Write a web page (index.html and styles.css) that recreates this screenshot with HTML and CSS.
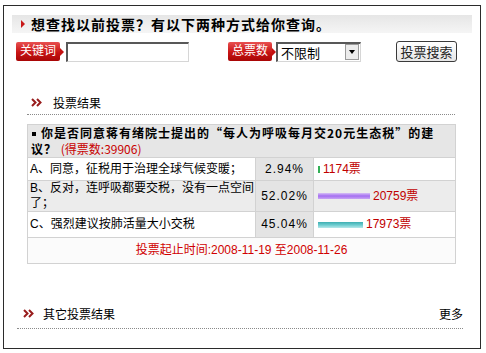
FILE: index.html
```html
<!DOCTYPE html>
<html lang="zh-CN">
<head>
    <meta charset="UTF-8">
    <title>投票查询</title>
    <link rel="stylesheet" href="styles.css">
</head>
<body>
    <div class="panel">
        <div class="search-title"><span class="title-mark"></span>想查找以前投票？有以下两种方式给你查询。</div>

        <div class="search-row">
            <span class="tag"><span class="tag-text">关键词</span></span>
            <input class="keyword" type="text">
            <span class="tag tag-count"><span class="tag-text">总票数</span></span>
            <div class="range-select">
                <span class="range-value">不限制</span>
                <span class="range-btn"></span>
            </div>
            <button class="search-btn">投票搜索</button>
        </div>

        <!-- 投票结果 -->
        <div class="section-head result-head">
            <svg class="head-mark" width="11" height="9" viewBox="0 0 11 9"><path d="M1 1l3.5 3.5L1 8M6 1l3.5 3.5L6 8" fill="none" stroke="#981c1c" stroke-width="2"/></svg>
            <span>投票结果</span>
        </div>

        <table class="poll">
            <colgroup>
                <col class="col-item">
                <col class="col-pct">
                <col class="col-vote">
            </colgroup>
            <tr class="row-question">
                <td colspan="3" class="question"><span class="dot"></span>你是否同意蒋有绪院士提出的“每人为呼吸每月交20元生态税”的建议？ <span class="total">(得票数:39906)</span></td>
            </tr>
            <tr class="row-a">
                <td class="item">A、同意，征税用于治理全球气候变暖；</td>
                <td class="pct">2.94%</td>
                <td class="vote"><span class="bar bar-green" style="width:2px"></span>1174票</td>
            </tr>
            <tr class="row-b alt">
                <td class="item">B、反对，连呼吸都要交税，没有一点空间了；</td>
                <td class="pct">52.02%</td>
                <td class="vote"><span class="bar bar-purple" style="width:52px"></span>20759票</td>
            </tr>
            <tr class="row-c">
                <td class="item">C、强烈建议按肺活量大小交税</td>
                <td class="pct">45.04%</td>
                <td class="vote"><span class="bar bar-teal" style="width:45px"></span>17973票</td>
            </tr>
            <tr class="row-foot">
                <td colspan="3" class="period">投票起止时间:2008-11-19 至2008-11-26</td>
            </tr>
        </table>

        <!-- 其它投票结果 -->
        <div class="section-head other-head">
            <svg class="head-mark" width="11" height="9" viewBox="0 0 11 9"><path d="M1 1l3.5 3.5L1 8M6 1l3.5 3.5L6 8" fill="none" stroke="#981c1c" stroke-width="2"/></svg>
            <span>其它投票结果</span>
            <a class="more" href="#">更多</a>
        </div>
    </div>
</body>
</html>
```

FILE: styles.css
```css
body {
    margin: 0;
    background: #fff;
    color: #000;
    font-family: "Liberation Sans", "Noto Sans CJK SC", sans-serif;
    font-size: 12px;
}

.panel {
    box-sizing: border-box;
    width: 478px;
    height: 344px;
    margin: 5px 0 0 3px;
    padding: 9px 8px 0;
    border: 1px solid #2b2b2b;
}

/* search box */
.search-title {
    display: flex;
    align-items: center;
    height: 18px;
    padding-left: 9px;
    background: linear-gradient(to bottom, #e6e6e6, #f5f5f5);
    font-family: "Noto Sans CJK SC", sans-serif;
    font-size: 14px;
    font-weight: bold;
    letter-spacing: 1px;
}

.title-mark {
    width: 0;
    height: 0;
    margin-right: 6px;
    border-left: 4px solid #c81818;
    border-top: 4px solid transparent;
    border-bottom: 4px solid transparent;
}

.search-row {
    display: flex;
    align-items: center;
    height: 21px;
    margin-top: 8px;
    padding-left: 4px;
}

.tag {
    display: flex;
    align-items: center;
}

.tag-text {
    height: 19px;
    line-height: 19px;
    padding: 0 4px;
    border-radius: 2px;
    color: #fff;
    font-size: 12px;
    background: linear-gradient(to bottom, #e85050, #c81414 55%, #a80606);
}

.tag::after {
    content: "";
    border-left: 4px solid #c41010;
    border-top: 4px solid transparent;
    border-bottom: 4px solid transparent;
}

.keyword {
    box-sizing: border-box;
    width: 123px;
    height: 20px;
    margin: 0 0 0 2px;
    padding: 0 2px;
    border-top: 2px solid #585858;
    border-left: 2px solid #585858;
    border-right: 1px solid #d6d6d6;
    border-bottom: 1px solid #d6d6d6;
    background: #fff;
}

.tag-count {
    margin-left: 39px;
}

.range-select {
    box-sizing: border-box;
    display: flex;
    align-items: center;
    width: 85px;
    height: 20px;
    border-top: 2px solid #585858;
    border-left: 2px solid #585858;
    border-right: 1px solid #d6d6d6;
    border-bottom: 1px solid #d6d6d6;
    background: #fff;
}

.range-value {
    flex: 1;
    padding-left: 3px;
    font-size: 13px;
    font-family: "Noto Sans CJK SC", sans-serif;
}

.range-btn {
    box-sizing: border-box;
    display: flex;
    align-items: center;
    justify-content: center;
    width: 14px;
    height: 16px;
    margin-right: 1px;
    border: 1px solid #9a9a9a;
    background: #ececec;
}

.range-btn::after {
    content: "";
    border-top: 4px solid #000;
    border-left: 3px solid transparent;
    border-right: 3px solid transparent;
}

.search-btn {
    box-sizing: border-box;
    width: 61px;
    height: 21px;
    margin-left: 35px;
    padding: 0;
    border: 1px solid #3a3a3a;
    border-radius: 3px;
    background: linear-gradient(to bottom, #ffffff, #e6e6e6);
    color: #222;
    font-family: "Noto Sans CJK SC", sans-serif;
    font-size: 13px;
}

/* section heads */
.section-head {
    display: flex;
    align-items: center;
    height: 24px;
    border-bottom: 1px dotted #8a8a8a;
}

.result-head {
    margin: 28px 17px 0 15px;
    padding-left: 4px;
    gap: 11px;
}

.other-head {
    height: 22px;
    margin: 38px 9px 0 5px;
    padding: 0 0 4px 6px;
    gap: 9px;
}

.more {
    margin-left: auto;
    color: #000;
    text-decoration: none;
}

/* poll table */
.poll {
    width: 428px;
    margin: 9px 17px 0 15px;
    border-collapse: collapse;
    table-layout: fixed;
    border: 1px solid #cfcfcf;
}

.col-item { width: 228px; }
.col-pct { width: 58px; }
.col-vote { width: 142px; }

.poll td {
    padding: 0;
    border: 1px solid #d2d2d2;
    line-height: 15px;
}

.poll td.question {
    height: 32px;
    padding: 0 3px;
    line-height: 16px;
    background: #e6e6e6;
    font-family: "Noto Sans CJK SC", sans-serif;
    font-weight: bold;
    letter-spacing: 1px;
}

.dot {
    display: inline-block;
    width: 4px;
    height: 4px;
    margin: 0 5px 2px 1px;
    background: #000;
}

.total {
    color: #c80000;
    font-weight: normal;
    letter-spacing: 0;
}

.row-a td { height: 22px; }
.row-b td { height: 30px; }
.row-c td { height: 25px; }

.poll td.item {
    padding-left: 2px;
}

.alt .item,
.alt .vote {
    background: #ececec;
}

.pct {
    text-align: center;
    background: #e4e4e4;
    letter-spacing: 1px;
}

.poll td.vote {
    padding-left: 4px;
    color: #c00000;
}

.bar {
    display: inline-block;
    height: 6px;
    margin-right: 3px;
    vertical-align: middle;
}

.bar-green {
    height: 7px;
    background: #33b056;
}

.bar-purple {
    background: linear-gradient(to bottom, #d6bff6, #a46ef0 50%, #c9a6f4);
}

.bar-teal {
    background: linear-gradient(to bottom, #3eaeb2, #6ccccf 50%, #b8e8ea);
}

.period {
    height: 25px;
    text-align: center;
    color: #d00000;
    background: #fbfbfb;
}
```
